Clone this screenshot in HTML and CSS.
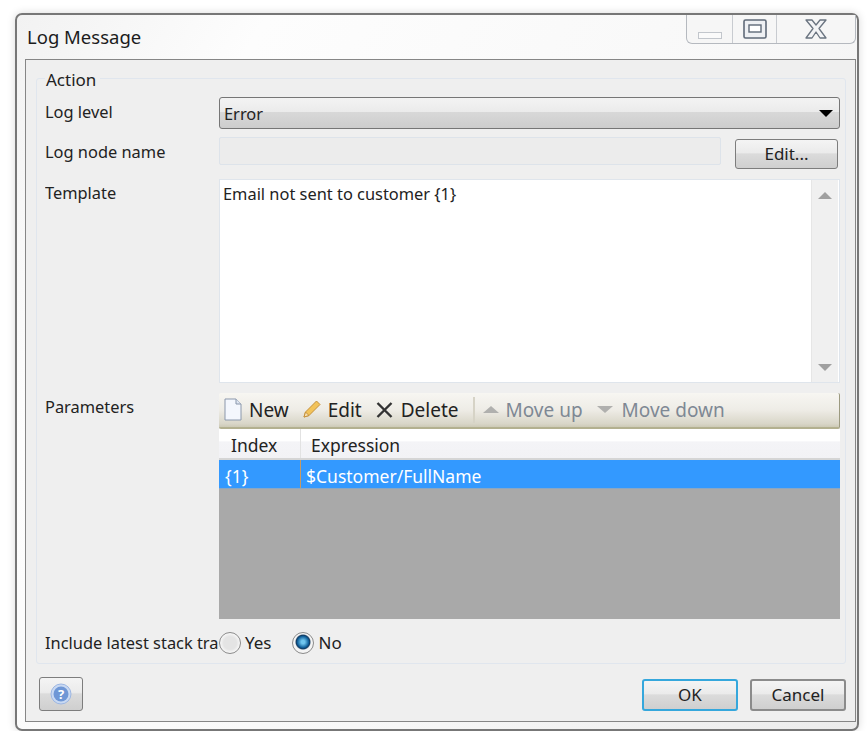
FILE: index.html
```html
<!DOCTYPE html>
<html lang="en">
<head>
  <meta charset="UTF-8">
  <meta name="viewport" content="width=device-width, initial-scale=1.0">
  <title>Log Message</title>
  <link rel="stylesheet" href="styles.css">
</head>
<body>

  <div class="window">
    <!-- title bar -->
    <div class="title-bar">
      <div class="title">Log Message</div>
      <div class="window-buttons">
        <div class="win-btn win-min"><span class="min-glyph"></span></div>
        <div class="win-btn win-max">
          <svg width="24" height="20" viewBox="0 0 24 20"><rect x="1" y="1" width="22" height="18" rx="1.5" fill="#eef0f3" stroke="#5f6a78" stroke-width="1.6"/><rect x="6" y="6" width="12" height="7" fill="#fff" stroke="#5f6a78" stroke-width="1.4"/></svg>
        </div>
        <div class="win-btn win-close">
          <svg width="24" height="20" viewBox="0 0 24 20"><path d="M2 1h6l4 5 4-5h6l-7 8.500 7 9.500h-6l-4-6-4 6H2l7-9.500z" fill="#f3f4f6" stroke="#6a7480" stroke-width="1.300" stroke-linejoin="round"/></svg>
        </div>
      </div>
    </div>

    <div class="panel">
      <fieldset class="group">
        <legend>Action</legend>

        <div class="row row-level">
          <label class="field-label">Log level</label>
          <div class="select">
            <span>Error</span>
            <span class="select-arrow"></span>
          </div>
        </div>

        <div class="row row-node">
          <label class="field-label">Log node name</label>
          <div class="input"></div>
          <button class="btn btn-edit">Edit...</button>
        </div>

        <div class="row row-template">
          <label class="field-label">Template</label>
          <div class="textarea">
            <div class="textarea-text">Email not sent to customer {1}</div>
            <div class="scrollbar">
              <span class="arrow-up"></span>
              <span class="arrow-down"></span>
            </div>
          </div>
        </div>

        <div class="row row-params">
          <label class="field-label">Parameters</label>
          <div class="params">
            <div class="toolbar">
              <span class="tool">
                <svg width="18" height="23" viewBox="1 0 18 23"><path d="M2 1h11l5 5v16H2z" fill="#f4f7fd" stroke="#8a97ab"/><path d="M13 1v5h5" fill="#dfe6f2" stroke="#8a97ab"/></svg>
                New
              </span>
              <span class="tool">
                <svg width="18" height="19" viewBox="1 1 18 19"><path d="M14.500 2l3.500 3.500L7 16.500 2 18l1.500-5z" fill="#f2c35a" stroke="#c6913a"/><path d="M2 18l1.500-5 3.500 3.500z" fill="#f6e2b8" stroke="#c6913a"/></svg>
                Edit
              </span>
              <span class="tool tool-delete">
                <svg width="17" height="18" viewBox="1 0 16 18"><path d="M2 2l14 14M16 2L2 16" stroke="#333" stroke-width="2.400" fill="none"/></svg>
                Delete
              </span>
              <span class="tool-sep"></span>
              <span class="tool tool-off"><span class="tri-up"></span>Move up</span>
              <span class="tool tool-off tool-down"><span class="tri-down"></span>Move down</span>
            </div>
            <div class="grid">
              <div class="grid-head">
                <div class="col-index">Index</div>
                <div class="col-expr">Expression</div>
              </div>
              <div class="grid-row">
                <div class="col-index">{1}</div>
                <div class="col-expr">$Customer/FullName</div>
              </div>
            </div>
          </div>
        </div>

        <div class="row row-stack">
          <label class="field-label">Include latest stack trace</label>
          <div class="radios">
            <span class="radio"></span><span class="radio-text radio-yes">Yes</span>
            <span class="radio radio-on"></span><span class="radio-text">No</span>
          </div>
        </div>
      </fieldset>

      <div class="footer">
        <button class="btn btn-help">
          <svg width="22" height="22" viewBox="0 0 22 22">
            <circle cx="11" cy="11" r="10" fill="#c9d9f2" stroke="#9db7e3"/>
            <circle cx="11" cy="11" r="7.500" fill="#6f97d6"/>
            <text x="11" y="15.500" text-anchor="middle" class="help-mark">?</text>
          </svg>
        </button>
        <div class="footer-right">
          <button class="btn btn-ok">OK</button>
          <button class="btn btn-cancel">Cancel</button>
        </div>
      </div>
    </div>
  </div>

</body>
</html>
```

FILE: styles.css
```css
body {
  margin: 0;
  padding: 0;
  background: #fff;
  font-family: "Noto Sans", sans-serif;
  font-size: 16.4px;
  color: #222;
  overflow: hidden;
}
.window {
  width: 844px;
  height: 718px;
  margin: 13px 0 0 15px;
  box-sizing: border-box;
  border: 2px solid #777;
  border-radius: 7px;
  padding: 0 1px 8px 8px;
  background: linear-gradient(120deg, #f2f2f2 0%, #fdfdfd 20%, #f8f8f8 60%, #ececec 100%);
  box-shadow: 0 0 8px rgba(0, 0, 0, 0.15);
}
.title-bar {
  display: flex;
  justify-content: space-between;
  height: 44px;
}
.title {
  font-size: 18.500px;
  padding: 9px 0 0 2px;
  color: #1c1c1c;
}
.window-buttons {
  display: flex;
  height: 29px;
  box-sizing: border-box;
  border: 1px solid #b5b9bf;
  border-top: none;
  border-radius: 0 0 6px 6px;
  background: #f6f6f6;
}
.win-btn {
  display: flex;
  align-items: center;
  justify-content: center;
  height: 100%;
}
.win-min { width: 45px; }
.win-max {
  width: 43px;
  border-left: 1px solid #c8cbd0;
  border-right: 1px solid #c8cbd0;
}
.win-close { width: 78px; }
.min-glyph {
  width: 22px;
  height: 5px;
  margin-top: 12px;
  border: 1px solid #c2c6cc;
  background: #fafafa;
}
.panel {
  height: 663px;
  box-sizing: border-box;
  border: 1px solid #868686;
  background: #efefef;
  padding: 7px 9px 0 10px;
}
.group {
  margin: 0;
  height: 597px;
  box-sizing: border-box;
  border: 1px solid #e0e6ee;
  border-radius: 3px;
  padding: 8px 5px 0 8px;
}
.group legend {
  padding: 0 4px 0 1px;
  height: 22px;
  line-height: 26px;
  font-size: 17px;
}
.row {
  display: flex;
}
.field-label {
  flex: none;
  width: 174px;
  overflow: hidden;
  white-space: nowrap;
}
.row-level { height: 40px; }
.row-level .field-label { line-height: 30px; }
.select {
  flex: 1;
  height: 32px;
  box-sizing: border-box;
  display: flex;
  align-items: center;
  justify-content: space-between;
  padding: 0 6px 0 4px;
  border: 1px solid #767676;
  border-radius: 3px;
  background: linear-gradient(#f3f3f3 0%, #ebebeb 45%, #d8d8d8 48%, #cdcdcd 100%);
}
.select-arrow {
  width: 0;
  height: 0;
  border-left: 7px solid transparent;
  border-right: 7px solid transparent;
  border-top: 7px solid #000;
}
.row-node {
  height: 42px;
  align-items: flex-start;
}
.row-node .field-label { line-height: 30px; }
.input {
  width: 502px;
  height: 28px;
  box-sizing: border-box;
  border: 1px solid #dde3ea;
  border-radius: 2px;
  background: #ececec;
}
.btn {
  font-family: "Noto Sans", sans-serif;
  font-size: 17px;
  color: #222;
  box-sizing: border-box;
  border: 1px solid #7d7d7d;
  border-radius: 3px;
  background: linear-gradient(#f4f4f4 0%, #ebebeb 45%, #dbdbdb 50%, #cfcfcf 100%);
  padding: 0 0 2px;
}
.btn-edit {
  width: 103px;
  height: 30px;
  margin: 2px 0 0 14px;
}
.row-template { height: 214px; }
.row-template .field-label { line-height: 28px; }
.textarea {
  flex: 1;
  height: 204px;
  box-sizing: border-box;
  display: flex;
  justify-content: space-between;
  border: 1px solid #dfe5ec;
  background: #fff;
}
.textarea-text { padding: 2px 0 0 3px; }
.scrollbar {
  width: 27px;
  margin-right: 1px;
  box-sizing: border-box;
  display: flex;
  flex-direction: column;
  justify-content: space-between;
  align-items: center;
  padding: 12px 0 11px;
  background: #f0f0f0;
  border-left: 1px solid #e6e6e6;
}
.arrow-up, .tri-up {
  width: 0;
  height: 0;
  border-left: 7px solid transparent;
  border-right: 7px solid transparent;
  border-bottom: 7px solid #a0a0a0;
}
.arrow-down, .tri-down {
  width: 0;
  height: 0;
  border-left: 7px solid transparent;
  border-right: 7px solid transparent;
  border-top: 7px solid #a0a0a0;
}
.row-params { height: 226px; }
.row-params .field-label { line-height: 28px; }
.params {
  flex: 1;
  display: flex;
  flex-direction: column;
}
.toolbar {
  height: 36px;
  box-sizing: border-box;
  display: flex;
  align-items: center;
  gap: 14px;
  padding-left: 5px;
  font-size: 19px;
  border-bottom: 2px solid #b3b08f;
  border-right: 1px solid #9c9a80;
  border-radius: 2px;
  background: linear-gradient(#f7f6f2 0%, #eeece6 50%, #d9d6c8 90%, #cdcab6 100%);
}
.tool {
  display: flex;
  align-items: center;
  gap: 7px;
  color: #222;
}
.tool-delete { gap: 8px; }
.tool-off { color: #7e8894; }
.tool-down { gap: 9px; }
.tool-sep {
  width: 2px;
  height: 26px;
  margin: 0 -6px 0 0;
  background: #d6d3c6;
}
.tri-up, .tri-down { border-left-width: 8px; border-right-width: 8px; }
.tri-up { border-bottom-color: #b0b0ae; }
.tri-down { border-top-color: #b0b0ae; }
.grid {
  height: 191px;
  background: #a9a9a9;
  font-size: 17.500px;
}
.grid-head {
  display: flex;
  height: 31px;
  box-sizing: border-box;
  background: linear-gradient(#fff 0%, #fff 40%, #f4f4f7 45%, #f2f2f5 100%);
  border-bottom: 2px solid #d5d5d5;
}
.grid-row {
  display: flex;
  height: 29px;
  box-sizing: border-box;
  background: #3399ff;
  color: #fff;
  border-bottom: 1px solid #8aa7c4;
}
.col-index {
  width: 82px;
  box-sizing: border-box;
  flex: none;
}
.col-expr { flex: 1; }
.grid-head .col-index { padding: 4px 0 0 12px; border-right: 1px solid #e2e2e2; }
.grid-head .col-expr { padding: 4px 0 0 10px; }
.grid-row .col-index { padding: 4px 0 0 6px; border-right: 1px solid #c79a63; }
.grid-row .col-expr { padding: 4px 0 0 5px; }
.row-stack {
  height: 47px;
  align-items: center;
}
.radios {
  display: flex;
  align-items: center;
  font-size: 17px;
}
.radio {
  width: 22px;
  height: 22px;
  box-sizing: border-box;
  border: 1px solid #8b8b8b;
  border-radius: 50%;
  background: radial-gradient(circle, #e4e4e4 0 45%, #f7f7f7 70%);
}
.radio-on {
  background: radial-gradient(circle at 50% 45%, #6fc5ee 0 12%, #0f5f9a 38%, #123a60 46%, #f4f4f4 54%);
}
.radio-text {
  margin: 0 18px 0 5px;
}
.radio-yes {
  margin: 0 20px 0 4px;
}
.footer {
  display: flex;
  justify-content: space-between;
  padding: 13px 0 0 3px;
}
.btn-help {
  width: 44px;
  height: 34px;
  padding: 0;
  display: flex;
  align-items: center;
  justify-content: center;
}
.help-mark {
  font-family: "Noto Sans", sans-serif;
  font-size: 13px;
  font-weight: bold;
  fill: #fff;
}
.footer-right {
  display: flex;
  gap: 12px;
  padding-top: 2px;
}
.btn-ok, .btn-cancel {
  width: 96px;
  height: 32px;
}
.btn-ok {
  border: 2px solid #35a7dc;
}
.btn-cancel {
  border: 2px solid #8b8b8b;
}
```
